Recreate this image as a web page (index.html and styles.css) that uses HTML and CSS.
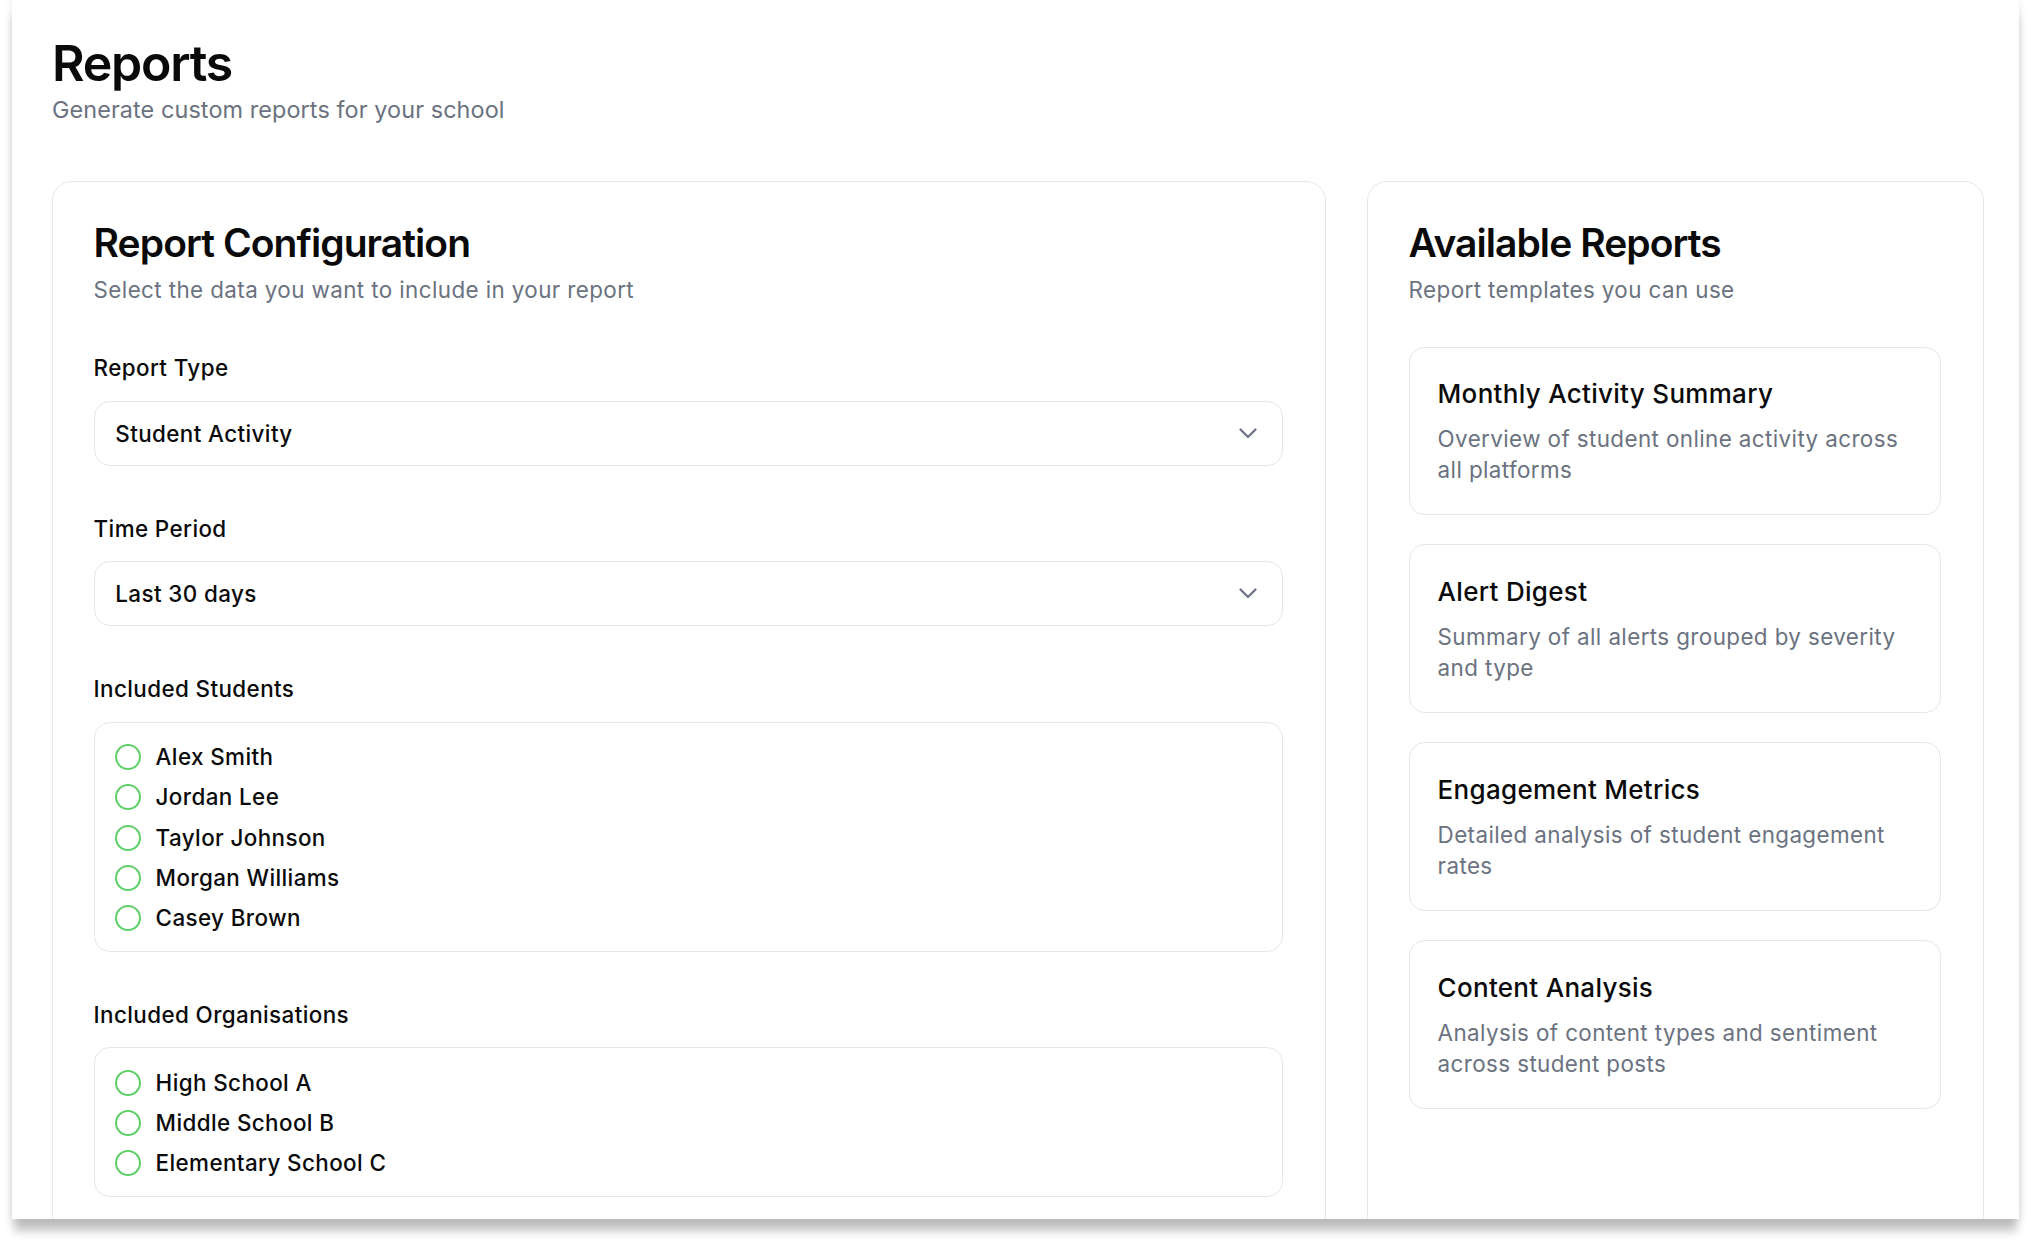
FILE: index.html
```html
<!DOCTYPE html>
<html lang="en">
<head>
<meta charset="utf-8">
<title>Reports</title>
<link rel="stylesheet" href="styles.css">
</head>
<body>
<div class="window">
  <header class="page-header">
    <h1>Reports</h1>
    <p>Generate custom reports for your school</p>
  </header>

  <main class="grid">
    <section class="card">
      <div class="card-header">
        <h2 class="card-title">Report Configuration</h2>
        <p class="card-desc">Select the data you want to include in your report</p>
      </div>
      <form class="form">
        <div class="field">
          <label class="field-label">Report Type</label>
          <div class="select">
            <span>Student Activity</span>
            <svg class="chevron" viewBox="0 0 18 11" width="18" height="11"><polyline points="1.5,1.5 9,9 16.5,1.5" fill="none" stroke="#6b7280" stroke-width="2.2" stroke-linecap="round" stroke-linejoin="round"/></svg>
          </div>
        </div>
        <div class="field">
          <label class="field-label">Time Period</label>
          <div class="select">
            <span>Last 30 days</span>
            <svg class="chevron" viewBox="0 0 18 11" width="18" height="11"><polyline points="1.5,1.5 9,9 16.5,1.5" fill="none" stroke="#6b7280" stroke-width="2.2" stroke-linecap="round" stroke-linejoin="round"/></svg>
          </div>
        </div>
        <div class="field">
          <label class="field-label">Included Students</label>
          <div class="checklist">
            <div class="check-row"><span class="check"></span><span class="check-text">Alex Smith</span></div>
            <div class="check-row"><span class="check"></span><span class="check-text">Jordan Lee</span></div>
            <div class="check-row"><span class="check"></span><span class="check-text">Taylor Johnson</span></div>
            <div class="check-row"><span class="check"></span><span class="check-text">Morgan Williams</span></div>
            <div class="check-row"><span class="check"></span><span class="check-text">Casey Brown</span></div>
          </div>
        </div>
        <div class="field">
          <label class="field-label">Included Organisations</label>
          <div class="checklist">
            <div class="check-row"><span class="check"></span><span class="check-text">High School A</span></div>
            <div class="check-row"><span class="check"></span><span class="check-text">Middle School B</span></div>
            <div class="check-row"><span class="check"></span><span class="check-text">Elementary School C</span></div>
          </div>
        </div>
      </form>
    </section>

    <aside class="card">
      <div class="card-header">
        <h2 class="card-title">Available Reports</h2>
        <p class="card-desc">Report templates you can use</p>
      </div>
      <div class="templates">
        <div class="template">
          <h3 class="template-title">Monthly Activity Summary</h3>
          <p class="template-desc">Overview of student online activity across all platforms</p>
        </div>
        <div class="template">
          <h3 class="template-title">Alert Digest</h3>
          <p class="template-desc">Summary of all alerts grouped by severity and type</p>
        </div>
        <div class="template">
          <h3 class="template-title">Engagement Metrics</h3>
          <p class="template-desc">Detailed analysis of student engagement rates</p>
        </div>
        <div class="template">
          <h3 class="template-title">Content Analysis</h3>
          <p class="template-desc">Analysis of content types and sentiment across student posts</p>
        </div>
      </div>
    </aside>
  </main>
</div>
</body>
</html>
```
FILE: styles.css
```css
* {
  box-sizing: border-box;
  margin: 0;
  padding: 0;
}

html,
body {
  background: #ffffff;
}

body {
  font-family: Inter, "Noto Sans", "Liberation Sans", sans-serif;
  color: #0a0a0a;
  height: 1243px;
  overflow: hidden;
}

.window {
  margin: 0 0 0 12px;
  width: 2007px;
  height: 1219px;
  background: #ffffff;
  overflow: hidden;
  padding: 32.5px 36px 0 40px;
  box-shadow: 0 14px 9px -2px rgba(0, 0, 0, 0.24), 0 0 9px rgba(0, 0, 0, 0.09);
}

.page-header h1 {
  font-size: 50px;
  line-height: 60px;
  font-weight: 600;
  letter-spacing: -0.025em;
}

.page-header p {
  font-size: 23.4px;
  line-height: 33.8px;
  letter-spacing: 0.1px;
  color: #6b7280;
}

.grid {
  display: grid;
  grid-template-columns: 1274px 616.6px;
  column-gap: 41px;
  margin-top: 54.6px;
  align-items: stretch;
}

.card {
  border: 1px solid #e5e7eb;
  border-radius: 20px;
  padding: 40.7px 41.6px 41.6px 40.6px;
  background: #ffffff;
}

.card-title {
  font-size: 39px;
  line-height: 39px;
  font-weight: 600;
  letter-spacing: -0.024em;
}

.card-desc {
  margin-top: 12.2px;
  font-size: 22.4px;
  line-height: 31.2px;
  letter-spacing: 0.4px;
  color: #6b7280;
}

.form {
  margin-top: 47.4px;
  display: flex;
  flex-direction: column;
  gap: 46.7px;
}

.field {
  display: flex;
  flex-direction: column;
  gap: 17.2px;
}

.field-label {
  font-size: 22.4px;
  line-height: 31.2px;
  letter-spacing: 0.4px;
  font-weight: 500;
}

.select {
  height: 65.3px;
  border: 1px solid #e5e7eb;
  border-radius: 15.6px;
  display: flex;
  align-items: center;
  justify-content: space-between;
  padding: 0 25px 0 20.7px;
  font-size: 22.4px;
  line-height: 31.2px;
  letter-spacing: 0.4px;
  font-weight: 500;
}

.chevron {
  display: block;
}

.checklist {
  border: 1px solid #e5e7eb;
  border-radius: 15.6px;
  padding: 21.6px 20px 20px;
  display: flex;
  flex-direction: column;
  gap: 14.25px;
}

.check-row {
  display: flex;
  align-items: center;
  gap: 15px;
  height: 26px;
}

.check {
  width: 26px;
  height: 26px;
  border: 2px solid #5fd068;
  border-radius: 50%;
  flex: none;
}

.check-text {
  font-size: 22.4px;
  line-height: 26px;
  letter-spacing: 0.4px;
  font-weight: 500;
}

.templates {
  margin-top: 41.6px;
  display: flex;
  flex-direction: column;
  gap: 29.5px;
}

.template {
  border: 1px solid #e5e7eb;
  border-radius: 15.6px;
  padding: 28.6px 28px;
}

.template-title {
  font-size: 26px;
  line-height: 36.4px;
  letter-spacing: 0.3px;
  font-weight: 500;
}

.template-desc {
  margin-top: 10.4px;
  font-size: 22.4px;
  line-height: 31.2px;
  letter-spacing: 0.4px;
  color: #6b7280;
}
```
